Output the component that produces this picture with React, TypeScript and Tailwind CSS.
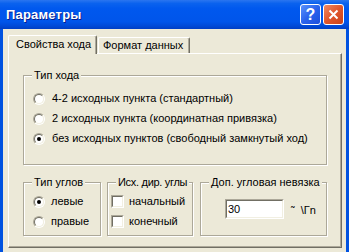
import React from 'react';

const font = { fontFamily: '"Liberation Sans", Arial, sans-serif' };

function Radio({ checked }: { checked?: boolean }) {
  return (
    <span className="w-[12px] h-[12px] rounded-full border border-t-[#aca899] border-l-[#aca899] border-b-white border-r-white flex shrink-0">
      <span className="flex-1 rounded-full border border-t-[#716f64] border-l-[#716f64] border-b-[#f1efe2] border-r-[#f1efe2] bg-white flex items-center justify-center">
        {checked && <span className="w-[4px] h-[4px] rounded-full bg-black" />}
      </span>
    </span>
  );
}

function Check() {
  return (
    <span className="w-[13px] h-[13px] border border-t-[#aca899] border-l-[#aca899] border-b-white border-r-white flex shrink-0">
      <span className="flex-1 border border-t-[#716f64] border-l-[#716f64] border-b-[#f1efe2] border-r-[#f1efe2] bg-white" />
    </span>
  );
}

function Group({ title, className, titleClass = '', children }: { title: string; className: string; titleClass?: string; children?: React.ReactNode }) {
  return (
    <div className={`relative border border-[#aca899] shadow-[inset_1px_1px_0_#fff,1px_1px_0_#fff] ${className}`}>
      <span className={`absolute left-[8px] top-[-7px] bg-[#ece9d8] px-[2px] leading-[13px] whitespace-nowrap ${titleClass}`}>{title}</span>
      {children}
    </div>
  );
}

export default function App() {
  return (
    <div className="w-[349px] h-[252px] overflow-hidden bg-[#0052e0] flex flex-col text-[11px] text-black" style={font}>
      {/* title bar */}
      <div className="h-[29px] shrink-0 flex items-center pl-[6px] pr-[5px] bg-[linear-gradient(to_bottom,#2a75f0_0%,#0a62ee_12%,#0058ee_30%,#0055ea_75%,#0049d6_90%,#003ec4_100%)]">
        <span className="text-white font-bold text-[13px] tracking-[0.2px] [text-shadow:1px_1px_0_#0a1e8a] flex-1">Параметры</span>
        <div className="flex gap-[2px]">
          <div className="w-[21px] h-[21px] rounded-[3px] border border-white bg-[linear-gradient(135deg,#5a92fb_0%,#2a63ec_50%,#1c4fdc_100%)] flex items-center justify-center text-white font-bold text-[16px] leading-none">?</div>
          <div className="w-[21px] h-[21px] rounded-[3px] border border-white bg-[linear-gradient(135deg,#ef8a64_0%,#e0562c_50%,#c94219_100%)] flex items-center justify-center">
            <svg width="11" height="11" viewBox="0 0 11 11">
              <path d="M1.5 1.5 L9.5 9.5 M9.5 1.5 L1.5 9.5" stroke="#fff" strokeWidth="2" />
            </svg>
          </div>
        </div>
      </div>

      {/* body */}
      <div className="flex-1 mx-[3px] bg-[#ece9d8] pt-[6px] pl-[5px] flex flex-col">
        <div className="flex items-end h-[18px]">
          <div className="relative z-10 -mb-px h-[19px] w-[89px] bg-[#ece9d8] border-l border-t border-r border-l-white border-t-white border-r-[#716f64] rounded-tl-[2px] rounded-tr-[2px] shadow-[inset_-1px_0_0_#aca899] flex items-center pl-[7px] pb-[1px] whitespace-nowrap">
            Свойства хода
          </div>
          <div className="ml-[1px] h-[16px] w-[92px] border-l border-t border-r border-l-white border-t-white border-r-[#716f64] rounded-tl-[2px] rounded-tr-[2px] shadow-[inset_-1px_0_0_#aca899] flex items-center pl-[4px] whitespace-nowrap">
            Формат данных
          </div>
        </div>

        <div className="w-[334px] h-[195px] border border-t-white border-l-white border-r-[#716f64] border-b-[#716f64] shadow-[inset_-1px_-1px_0_#aca899] pl-[14px] pt-[21px] flex flex-col">
          <Group title="Тип хода" className="w-[304px] h-[90px] flex flex-col pl-[9px] pt-[16px] gap-[7px]">
            <div className="flex items-center gap-[7px] h-[13px] whitespace-nowrap">
              <Radio />
              <span>4-2 исходных пункта (стандартный)</span>
            </div>
            <div className="flex items-center gap-[7px] h-[13px] whitespace-nowrap">
              <Radio />
              <span>2 исходных пункта (координатная привязка)</span>
            </div>
            <div className="flex items-center gap-[7px] h-[13px] whitespace-nowrap">
              <Radio checked />
              <span>без исходных пунктов (свободный замкнутый ход)</span>
            </div>
          </Group>

          <div className="flex mt-[17px]">
            <Group title="Тип углов" className="w-[78px] h-[54px] flex flex-col pl-[9px] pt-[12px] gap-[7px]">
              <div className="flex items-center gap-[6px] h-[13px]">
                <Radio checked />
                <span>левые</span>
              </div>
              <div className="flex items-center gap-[6px] h-[13px]">
                <Radio />
                <span>правые</span>
              </div>
            </Group>
            <Group title="Исх. дир. углы" titleClass="tracking-[-0.3px] left-[7px] px-[1px]" className="ml-[6px] w-[86px] h-[54px] flex flex-col pl-[3px] pt-[12px] gap-[7px]">
              <div className="flex items-center gap-[5px] h-[13px]">
                <Check />
                <span>начальный</span>
              </div>
              <div className="flex items-center gap-[5px] h-[13px]">
                <Check />
                <span>конечный</span>
              </div>
            </Group>
            <Group title="Доп. угловая невязка" className="ml-[7px] w-[127px] h-[54px] flex items-start pl-[24px] pt-[16px]">
              <div className="w-[59px] h-[20px] border border-t-[#aca899] border-l-[#aca899] border-b-white border-r-white flex">
                <div className="flex-1 border border-t-[#716f64] border-l-[#716f64] border-b-[#f1efe2] border-r-[#f1efe2] bg-white flex items-center pl-[1px]">
                  30
                </div>
              </div>
              <span className="ml-[7px] mt-[3px] whitespace-nowrap">˜&nbsp; \Гn</span>
            </Group>
          </div>
        </div>
      </div>
    </div>
  );
}
